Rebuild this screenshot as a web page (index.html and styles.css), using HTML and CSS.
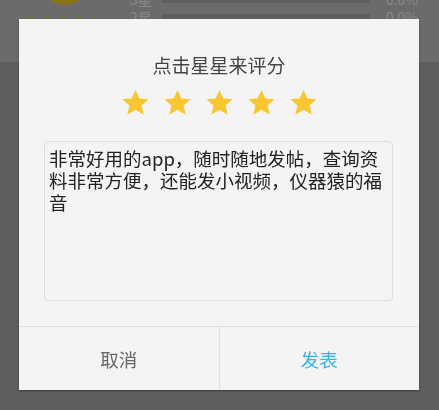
FILE: index.html
```html
<!DOCTYPE html>
<html lang="zh-CN">
<head>
    <meta charset="UTF-8">
    <meta name="viewport" content="width=device-width, initial-scale=1.0">
    <title>评分</title>
    <link rel="stylesheet" href="styles.css">
</head>
<body>
    <div class="page">
        <div class="summary">
            <div class="score">
                <div class="avatar"></div>
                <div class="mini-stars">★★★★★</div>
            </div>
            <div class="rows">
                <div class="row"><span class="lbl">3星</span><span class="bar"></span><span class="pct">0.0%</span></div>
                <div class="row"><span class="lbl">2星</span><span class="bar"></span><span class="pct">0.0%</span></div>
            </div>
        </div>
    </div>

    <div class="mask">
        <div class="dialog">
            <h2 class="title">点击星星来评分</h2>
            <div class="stars">
                <svg viewBox="0 0 24 24"><path d="M12 1.6l3.2 7.1 7.6.7-5.8 5.1 1.8 7.6L12 18.1l-6.8 4 1.8-7.6-5.8-5.1 7.6-.7z"/></svg>
                <svg viewBox="0 0 24 24"><path d="M12 1.6l3.2 7.1 7.6.7-5.8 5.1 1.8 7.6L12 18.1l-6.8 4 1.8-7.6-5.8-5.1 7.6-.7z"/></svg>
                <svg viewBox="0 0 24 24"><path d="M12 1.6l3.2 7.1 7.6.7-5.8 5.1 1.8 7.6L12 18.1l-6.8 4 1.8-7.6-5.8-5.1 7.6-.7z"/></svg>
                <svg viewBox="0 0 24 24"><path d="M12 1.6l3.2 7.1 7.6.7-5.8 5.1 1.8 7.6L12 18.1l-6.8 4 1.8-7.6-5.8-5.1 7.6-.7z"/></svg>
                <svg viewBox="0 0 24 24"><path d="M12 1.6l3.2 7.1 7.6.7-5.8 5.1 1.8 7.6L12 18.1l-6.8 4 1.8-7.6-5.8-5.1 7.6-.7z"/></svg>
            </div>
            <textarea class="comment">非常好用的app，随时随地发帖，查询资料非常方便，还能发小视频，仪器猿的福音</textarea>
            <div class="actions">
                <button class="btn cancel">取消</button>
                <button class="btn submit">发表</button>
            </div>
        </div>
    </div>
</body>
</html>
```

FILE: styles.css
```css
body { margin: 0; font-family: "Noto Sans CJK SC", "Noto Sans", sans-serif; background: #5e5e5e; }
.page { height: 410px; overflow: hidden; }
.summary { display: flex; background: #6b6b6b; height: 72px; margin-top: -10px; }
.score { width: 130px; display: flex; flex-direction: column; align-items: center; }
.avatar { width: 50px; height: 50px; border-radius: 50%; background: #8a7418; margin-top: -35px; }
.mini-stars { color: #7d7226; font-size: 13px; line-height: 14px; letter-spacing: 3px; margin-top: 8px; }
.rows { flex: 1; padding-right: 21px; }
.row { display: flex; align-items: center; height: 18px; line-height: 18px; color: #8a8a8a; font-size: 14px; }
.lbl { width: 32px; }
.bar { flex: 1; height: 7px; background: #5f5f5f; margin-right: 14px; }
.pct { width: 34px; text-align: right; }

.mask { position: fixed; inset: 0; }
.dialog {
    position: absolute; left: 19px; top: 19px; width: 400px; height: 371px;
    background: #f4f4f4; box-shadow: 0 1px 2px rgba(0,0,0,0.35);
    display: flex; flex-direction: column; box-sizing: border-box; padding-top: 34px;
}
.title { margin: 0; font-size: 19px; font-weight: normal; line-height: 24px; color: #444; text-align: center; }
.stars { display: flex; justify-content: center; gap: 13px; margin-top: 11px; }
.stars svg { width: 29px; height: 29px; fill: #f8c630; }
.comment {
    margin: 24px 0 0 25px; width: 349px; height: 160px; box-sizing: border-box;
    border: 1px solid #dcdcdc; border-radius: 4px; background: #f4f4f4;
    padding: 5px 3px 0 4px; resize: none; outline: none;
    font-family: "Noto Sans CJK SC", sans-serif; font-size: 18.5px; line-height: 22px; color: #222;
}
.actions { display: flex; margin-top: auto; border-top: 1px solid #dedede; height: 63px; }
.btn {
    flex: 1; border: none; background: none; font-family: "Noto Sans CJK SC", sans-serif;
    font-size: 18.5px; color: #666; cursor: pointer;
}
.btn + .btn { border-left: 1px solid #dedede; }
.submit { color: #33b5e5; }
```
